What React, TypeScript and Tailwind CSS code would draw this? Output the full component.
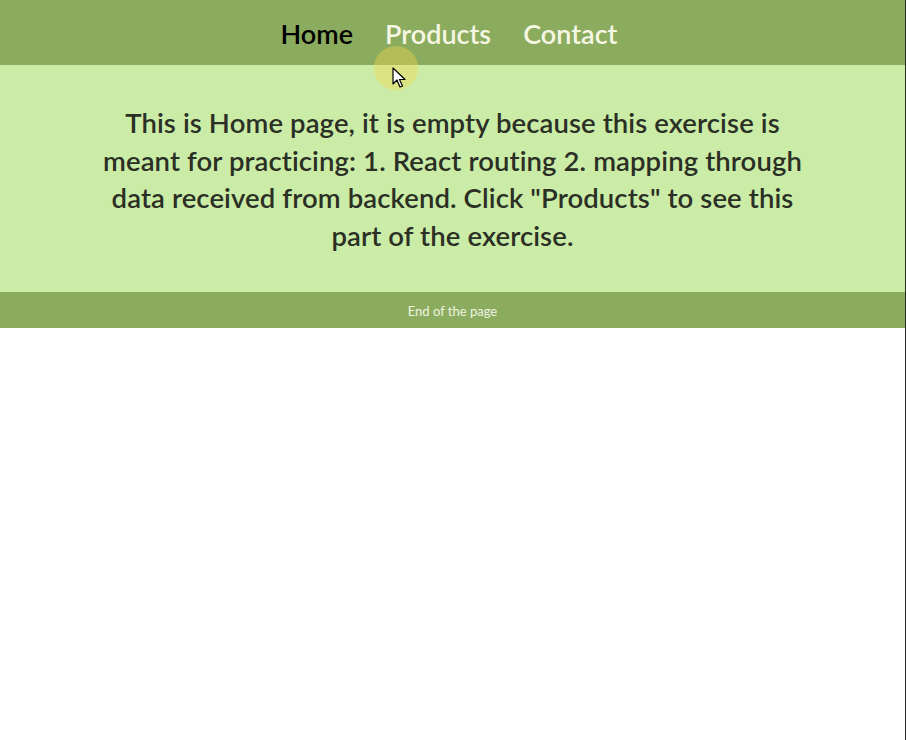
import React from 'react';

const links = ['Home', 'Products', 'Contact'];

export default function App() {
  return (
    <div className="relative min-h-[740px] bg-white border-r border-[#2a2a2a]" style={{ fontFamily: 'Lato, "Open Sans", sans-serif' }}>
      {/* Navigation */}
      <nav className="h-[65px] bg-[#8bac5e] flex items-center justify-center gap-[32px] pr-[7px] pt-[1px]">
        {links.map((link, index) =>
        <a
          key={link}
          href="#"
          className={`text-[27px] font-semibold leading-none ${index === 0 ? 'text-black' : 'text-[#f6f6e4]'}`}>
            {link}
          </a>
        )}
      </nav>

      {/* Home content */}
      <main className="h-[227px] bg-[#caeca6] flex justify-center pt-[39px]">
        <p className="w-[726px] text-center text-[27.5px] leading-[37.5px] font-semibold text-[#2b2f25] tracking-[0.1px]">
          This is Home page, it is empty because this exercise is meant for
          practicing: 1. React routing 2. mapping through data received from
          backend. Click "Products" to see this part of the exercise.
        </p>
      </main>

      {/* Footer */}
      <footer className="h-[36px] bg-[#8bac5e] flex items-center justify-center pt-[4px]">
        <span className="text-[13px] text-[#eef3e0]">End of the page</span>
      </footer>

      {/* Cursor highlight */}
      <div className="absolute left-[374px] top-[46px] w-[44px] h-[44px] rounded-full bg-[#f5d84f]/40 pointer-events-none" />
      <svg className="absolute left-[392px] top-[67px] pointer-events-none" width="14" height="22" viewBox="0 0 14 22">
        <path d="M1 1 L1 17 L5 13 L8 20 L10.5 19 L7.5 12.5 L13 12.5 Z" fill="white" stroke="black" strokeWidth="1.2" strokeLinejoin="round" />
      </svg>
    </div>);

}
